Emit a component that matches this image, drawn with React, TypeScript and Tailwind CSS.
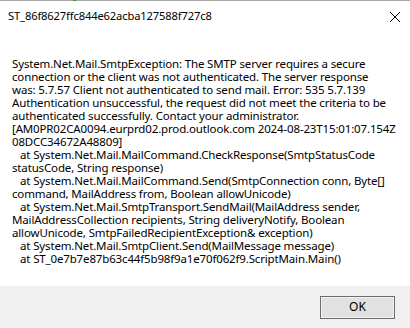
import React from "react";

const lines: [string, boolean][] = [
  ["System.Net.Mail.SmtpException: The SMTP server requires a secure", false],
  ["connection or the client was not authenticated. The server response", false],
  ["was: 5.7.57 Client not authenticated to send mail. Error: 535 5.7.139", false],
  ["Authentication unsuccessful, the request did not meet the criteria to be", false],
  ["authenticated successfully. Contact your administrator.", false],
  ["[AM0PR02CA0094.eurprd02.prod.outlook.com 2024-08-23T15:01:07.154Z", false],
  ["08DCC34672A48809]", false],
  ["at System.Net.Mail.MailCommand.CheckResponse(SmtpStatusCode", true],
  ["statusCode, String response)", false],
  ["at System.Net.Mail.MailCommand.Send(SmtpConnection conn, Byte[]", true],
  ["command, MailAddress from, Boolean allowUnicode)", false],
  ["at System.Net.Mail.SmtpTransport.SendMail(MailAddress sender,", true],
  ["MailAddressCollection recipients, String deliveryNotify, Boolean", false],
  ["allowUnicode, SmtpFailedRecipientException& exception)", false],
  ["at System.Net.Mail.SmtpClient.Send(MailMessage message)", true],
  ["at ST_0e7b7e87b63c44f5b98f9a1e70f062f9.ScriptMain.Main()", true],
];

export default function App() {
  return (
    <div
      className="w-[410px] h-[328px] bg-white flex flex-col overflow-hidden text-black"
      style={{ fontFamily: '"Noto Sans", "Open Sans", sans-serif' }}
    >
      <div className="h-px bg-[#a8a8a8] flex">
        <div className="w-[73px]" />
        <div className="w-[3px] bg-[#2e9b3a]" />
      </div>
      <div className="h-[31px] flex items-center justify-between pl-[8px] pr-[10px]">
        <span className="text-[11.2px] tracking-[-0.15px]">ST_86f8627ffc844e62acba127588f727c8</span>
        <svg width="12" height="12" viewBox="0 0 12 12" className="mr-[-1px]">
          <path d="M1 1 L11 11 M11 1 L1 11" stroke="#000" strokeWidth="1" fill="none" />
        </svg>
      </div>
      <div className="flex-1 pl-[12px] pt-[25px] text-[11.5px] leading-[13px] tracking-[-0.15px]">
        {lines.map(([t, ind], i) => (
          <div key={i} className={ind ? "pl-[8px] whitespace-nowrap" : "whitespace-nowrap"}>
            {t}
          </div>
        ))}
      </div>
      <div className="h-[42px] bg-[#f0f0f0] flex items-center justify-end pr-[15px]">
        <div className="w-[75px] h-[23px] border border-[#6d6d6d] bg-[#e1e1e1] flex items-center justify-center shadow-[inset_0_0_0_1px_#f3f3f3]">
          <span className="text-[12px]">OK</span>
        </div>
      </div>
    </div>
  );
}
